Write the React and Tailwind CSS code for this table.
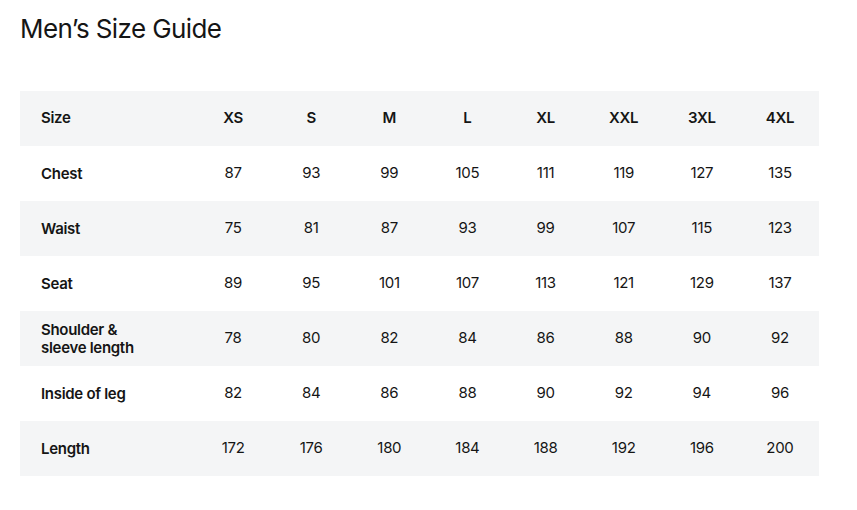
import React from "react";

const sizes = ["XS", "S", "M", "L", "XL", "XXL", "3XL", "4XL"];

const rows = [
  { label: "Chest", values: [87, 93, 99, 105, 111, 119, 127, 135] },
  { label: "Waist", values: [75, 81, 87, 93, 99, 107, 115, 123] },
  { label: "Seat", values: [89, 95, 101, 107, 113, 121, 129, 137] },
  { label: "Shoulder & sleeve length", values: [78, 80, 82, 84, 86, 88, 90, 92] },
  { label: "Inside of leg", values: [82, 84, 86, 88, 90, 92, 94, 96] },
  { label: "Length", values: [172, 176, 180, 184, 188, 192, 196, 200] },
];

export default function App() {
  return (
    <div className="w-[857px] h-[510px] bg-white text-[#151515] font-['Inter',sans-serif] px-5 pt-[13px]">
      <h1 className="text-[26px] font-normal tracking-[-0.6px] leading-[32px]">
        Men’s Size Guide
      </h1>

      <div className="mt-[46px] w-[799px]">
        <div className="grid grid-cols-[174px_repeat(8,1fr)] h-[55px] items-center bg-[#f4f5f6] text-[15px] font-semibold tracking-[-0.3px]">
          <div className="pl-[21px]">Size</div>
          {sizes.map((s) => (
            <div key={s} className="text-center">
              {s}
            </div>
          ))}
        </div>

        {rows.map((row, i) => (
          <div
            key={row.label}
            className={`grid grid-cols-[174px_repeat(8,1fr)] h-[55px] items-center text-[15px] tracking-[-0.3px] ${
              i % 2 === 1 ? "bg-[#f4f5f6]" : "bg-white"
            }`}
          >
            <div className="pl-[21px] pr-8 font-semibold leading-[18px]">
              {row.label === "Shoulder & sleeve length" ? (
                <>
                  Shoulder &amp;
                  <br />
                  sleeve length
                </>
              ) : (
                row.label
              )}
            </div>
            {row.values.map((v, j) => (
              <div key={j} className="text-center font-normal">
                {v}
              </div>
            ))}
          </div>
        ))}
      </div>
    </div>
  );
}
